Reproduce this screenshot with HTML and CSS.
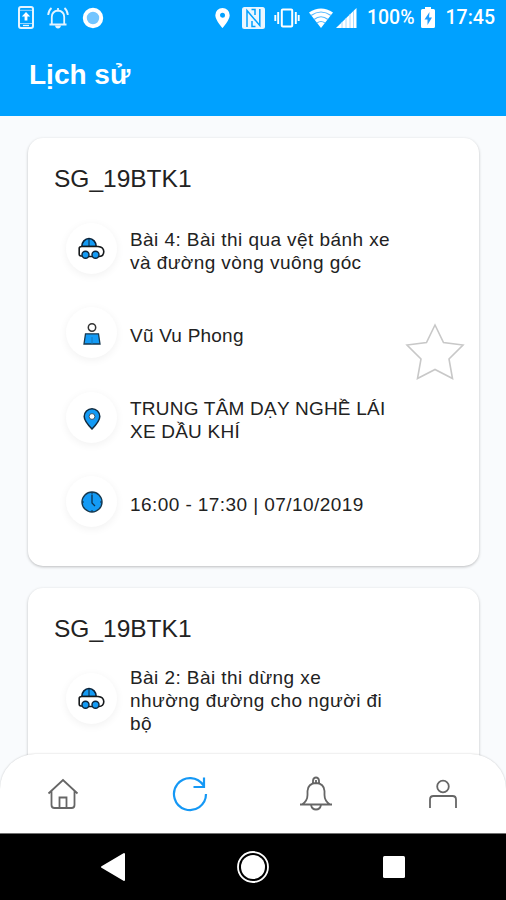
FILE: index.html
```html
<!DOCTYPE html>
<html lang="vi">
<head>
  <meta charset="UTF-8">
  <meta name="viewport" content="width=device-width, initial-scale=1.0">
  <title>Lịch sử</title>
  <link rel="stylesheet" href="styles.css">
</head>
<body>
  <!-- Shared icons -->
  <svg class="sprite" width="0" height="0">
    <symbol id="car" viewBox="0 0 27 23">
      <path d="M3.800 9.500A7.200 8 0 0 1 18.200 9.500Z" fill="#149bf5" stroke="#0b2238" stroke-width="1.600"/>
      <path d="M11 2v7" stroke="#0b2238"/>
      <path d="M4 19H3Q1.200 19 1.200 17V11Q1.500 9.500 4 9.500H20Q25.800 10 25.800 14.800 25.500 19.500 21 19.500H9" fill="#fff" stroke="#16191c" stroke-width="1.600"/>
      <circle cx="7.500" cy="17.800" r="3.500" fill="#149bf5" stroke="#0b2238" stroke-width="1.400"/>
      <circle cx="17.500" cy="17.800" r="3.500" fill="#149bf5" stroke="#0b2238" stroke-width="1.400"/>
    </symbol>
  </svg>

  <div class="phone">
    <header class="header">
      <div class="status">
        <div class="status-left">
          <svg width="16" height="24" viewBox="0 0 16 24">
            <rect x="1" y="1" width="14" height="21" rx="2" fill="none" stroke="#e4f4ff" stroke-width="2"/>
            <path d="M2 4.3h12M2 17.5h12" stroke="#9bd7ff"/>
            <path d="M8 6 3.8 10.5h2.8v4h2.8v-4h2.8Z" fill="#fff"/>
            <path d="M5 19.5h6" stroke="#e4f4ff" stroke-width="1.3"/>
          </svg>
          <svg width="22" height="24" viewBox="0 0 22 24" fill="none" stroke="#e4f4ff" stroke-width="1.8">
            <path d="M2.500 18.500h17M4.800 18V11Q5 5 11 4.500 17 5 17.200 11V18M11 4.500V2M4.500 2Q1.500 4.500 1.200 9M17.500 2q3 2.500 3.300 7"/>
            <path d="M8 19.500h6q-.5 3-3 3t-3-3Z" fill="#e4f4ff" stroke="none"/>
          </svg>
          <svg width="22" height="22" viewBox="0 0 22 22">
            <circle cx="11" cy="11" r="8.200" fill="#73c5ff" stroke="#fff" stroke-width="4"/>
          </svg>
        </div>
        <div class="status-right">
          <svg class="pin" width="15" height="20" viewBox="0 0 15 20">
            <path d="M7.500 0A7.200 7.200 0 0 0 .3 7.200C.3 12 7.500 20 7.500 20S14.700 12 14.700 7.200A7.200 7.200 0 0 0 7.500 0Zm0 4.700a2.500 2.500 0 1 1 0 5 2.500 2.500 0 0 1 0-5Z" fill="#fff" fill-rule="evenodd"/>
          </svg>
          <svg class="nfc" width="23" height="22" viewBox="0 0 23 22">
            <rect width="23" height="22" rx="2.500" fill="#eaf6ff"/>
            <path d="M5 20V3.500L17.800 18.500V2M9.500 2.500h3.500v5.500M13.500 19.500H10V14" fill="none" stroke="#00a1ff" stroke-width="1.500"/>
          </svg>
          <svg class="vibrate" width="26" height="20" viewBox="0 0 26 20" fill="none" stroke="#fff">
            <rect x="7.800" y="1.500" width="10.400" height="17" rx="1" stroke-width="2"/>
            <path d="M4.200 4v12M21.800 4v12M1.300 7v6M24.700 7v6" stroke-width="1.900"/>
          </svg>
          <svg class="wifi" width="24" height="20" viewBox="0 0 24 20">
            <path d="M0 4.500Q12-3.500 24 4.500L12 20Z" fill="#fff"/>
            <path d="M2 7.500Q12 .5 22 7.500M5 11.500Q12 6 19 11.500M8 15Q12 12 16 15" fill="none" stroke="#54b9ff" stroke-width="1.200"/>
          </svg>
          <svg class="signal" width="21" height="20" viewBox="0 0 21 20">
            <path d="M0 20 20.500 0V20Z" fill="#fff"/>
            <path d="M6 14v6M10 10v10M14 6v14M17.500 3v17" stroke="#a8daff"/>
          </svg>
          <span class="percent">100%</span>
          <svg class="battery" width="14" height="21" viewBox="0 0 14 21">
            <path d="M4 0H10V2H12.500Q14 2 14 3.500V19.500Q14 21 12.500 21H1.500Q0 21 0 19.500V3.500Q0 2 1.500 2H4Z" fill="#fff"/>
            <path d="M8.500 5 3.500 12.500H6.500V18L11 10.500H8Z" fill="#1b9dff"/>
          </svg>
          <span>17:45</span>
        </div>
      </div>
      <h1 class="title">Lịch sử</h1>
    </header>

    <main class="content">
      <section class="card">
        <h2 class="card-title">SG_19BTK1</h2>
        <div class="card-body">
          <ul class="info">
            <li class="info-row">
              <span class="icon"><svg width="27" height="23"><use href="#car"/></svg></span>
              <p>Bài 4: Bài thi qua vệt bánh xe<br>và đường vòng vuông góc</p>
            </li>
            <li class="info-row">
              <span class="icon">
                <svg width="18" height="24" viewBox="0 -2 18 24">
                  <circle cx="9" cy="4.500" r="3.700" fill="#fff" stroke="#333" stroke-width="1.500"/>
                  <path d="M2.500 10.800H15.500L17 21H1Z" fill="#149bf5" stroke="#17394f" stroke-width="1.300"/>
                  <path d="M9 14v7" stroke="#1679ba"/>
                </svg>
              </span>
              <p class="tight">Vũ Vu Phong</p>
            </li>
            <li class="info-row">
              <span class="icon">
                <svg width="18" height="25" viewBox="0 -3 18 25">
                  <path d="M9 21Q1.200 13 1.200 8.500A7.800 7.800 0 0 1 16.800 8.500Q16.800 13 9 21Z" fill="#149bf5" stroke="#122c40" stroke-width="1.500"/>
                  <circle cx="9" cy="8.500" r="2.900" fill="#fff" stroke="#234" stroke-width=".8"/>
                </svg>
              </span>
              <p class="tight">TRUNG TÂM DẠY NGHỀ LÁI<br>XE DẦU KHÍ</p>
            </li>
            <li class="info-row">
              <span class="icon">
                <svg width="22" height="22" viewBox="0 0 22 22">
                  <circle cx="11" cy="11" r="10" fill="#149bf5" stroke="#17394f" stroke-width="1.400"/>
                  <path d="M11 3.500V12L14 15" fill="none" stroke="#0b3353" stroke-width="1.300"/>
                  <path d="M11 1v2M11 19v2M1 11h2M19 11h2" stroke="#0b3353"/>
                </svg>
              </span>
              <p>16:00 - 17:30 | 07/10/2019</p>
            </li>
          </ul>
          <svg class="star" width="60" height="58" viewBox="0 0 60 58">
            <path d="M30 2 38.500 19.500 58 22 44 36 47.500 55.500 30 46.500 12.500 55.500 16 36 2 22 21.500 19.500Z" fill="none" stroke="#c8c8c8" stroke-width="1.600"/>
          </svg>
        </div>
      </section>

      <section class="card">
        <h2 class="card-title">SG_19BTK1</h2>
        <div class="card-body">
          <ul class="info">
            <li class="info-row">
              <span class="icon"><svg width="27" height="23"><use href="#car"/></svg></span>
              <p>Bài 2: Bài thi dừng xe<br>nhường đường cho người đi<br>bộ</p>
            </li>
          </ul>
        </div>
      </section>
    </main>

    <nav class="tabs">
      <a class="tab">
        <svg width="32" height="32" viewBox="0 0 32 32">
          <path d="M1.500 15.500 16 2 30.500 15.500M4.500 13V27Q4.500 30 7.500 30H24.500Q27.500 30 27.500 27V13M12.500 30V19.500H19.500V30"/>
        </svg>
      </a>
      <a class="tab active">
        <svg width="36" height="36" viewBox="0 0 36 36">
          <path d="M34 18A16 16 0 1 1 31.500 9.500M32 1.500V11H21.500"/>
        </svg>
      </a>
      <a class="tab">
        <svg width="34" height="36" viewBox="0 0 34 36">
          <path d="M1 28.500H33M3 28.500Q8.500 25 8.500 19V15Q9 7.500 17 7 25 7.500 25.500 15V19Q25.500 25 31 28.500M14 7.500V4.500Q14.500 1.500 17 1.500T20 4.500V7.500M17 4v3M12 29Q13 33.500 17 33.500T22 29"/>
        </svg>
      </a>
      <a class="tab">
        <svg width="30" height="30" viewBox="0 0 30 30">
          <circle cx="15" cy="7.500" r="5.800"/>
          <path d="M2 29V20.500Q2 17 5.500 17H24.500Q28 17 28 20.500V29"/>
        </svg>
      </a>
    </nav>

    <footer class="system-bar">
      <svg width="34" height="30" viewBox="-4 0 34 30"><path d="M24 2V28L2 15Z" fill="#fff" stroke="#fff" stroke-width="2" stroke-linejoin="round"/></svg>
      <svg width="34" height="34" viewBox="0 0 34 34"><circle cx="17" cy="17" r="15" fill="none" stroke="#fff" stroke-width="1.800"/><circle cx="17" cy="17" r="12" fill="#fff"/></svg>
      <svg width="34" height="22" viewBox="-6 0 34 22"><rect width="22" height="22" rx="1.500" fill="#fff"/></svg>
    </footer>
  </div>
</body>
</html>
```

FILE: styles.css
```css
* {
  box-sizing: border-box;
}

body {
  margin: 0;
  font-family: "Liberation Sans", Arial, sans-serif;
  color: #222;
}

svg {
  display: block;
  flex-shrink: 0;
}

.sprite {
  display: none;
}

.phone {
  display: flex;
  flex-direction: column;
  width: 506px;
  height: 900px;
  overflow: hidden;
  background: #f9fbfd;
}

/* Header */
.header {
  flex: none;
  height: 116px;
  background: #00a1ff;
  color: #fff;
}

.status {
  display: flex;
  justify-content: space-between;
  align-items: center;
  height: 35px;
  padding: 0 11px 0 18px;
  font-family: Roboto, sans-serif;
  font-size: 19.5px;
  font-weight: 500;
}

.status-left,
.status-right {
  display: flex;
  align-items: center;
}

.status-left {
  gap: 13px;
}

.nfc {
  margin-left: 12px;
}

.vibrate {
  margin-left: 9px;
}

.wifi {
  margin-left: 9px;
}

.signal {
  margin-left: 3px;
}

.percent {
  margin-left: 9.5px;
}

.battery {
  margin: 0 11px 0 6px;
}

.title {
  margin: 24px 0 0 29px;
  font-size: 28px;
  line-height: 32px;
}

/* Cards */
.content {
  flex: 1;
  min-height: 0;
  padding: 22px 27px 0 28px;
  overflow: hidden;
}

.card {
  height: 428px;
  margin-bottom: 22px;
  padding: 26px 14px 0 26px;
  background: #fff;
  border-radius: 15px;
  box-shadow: 0 1px 3px rgba(0, 0, 0, 0.25);
}

.card-title {
  margin: 0;
  font-size: 24.5px;
  font-weight: normal;
  line-height: 30px;
}

.card-body {
  display: flex;
  justify-content: space-between;
  align-items: center;
}

.info {
  margin: 12px 0 0;
  padding: 0 0 0 12px;
  list-style: none;
}

.info-row {
  display: flex;
  align-items: center;
  gap: 13px;
  height: 84.5px;
}

.info-row p {
  margin: 5px 0 0;
  font-size: 19px;
  letter-spacing: 0.43px;
  line-height: 23px;
  white-space: nowrap;
}

.info-row .tight {
  letter-spacing: 0.22px;
}

.icon {
  display: flex;
  justify-content: center;
  align-items: center;
  width: 51px;
  height: 51px;
  border-radius: 50%;
  background: #fff;
  box-shadow: 0 2px 8px rgba(0, 0, 0, 0.06);
}

.star {
  margin-top: -35px;
}

/* Bottom navigation */
.tabs {
  display: grid;
  grid-template-columns: repeat(4, 1fr);
  flex: none;
  z-index: 1;
  height: 79px;
  margin-top: -35px;
  background: #fff;
  border-radius: 35px 35px 0 0;
  box-shadow: 0 0 2px rgba(0, 0, 0, 0.22);
}

.tab {
  display: flex;
  justify-content: center;
  align-items: center;
}

.tab svg {
  fill: none;
  stroke: #666;
  stroke-width: 1.8;
}

.tab.active svg {
  stroke: #1598f5;
  stroke-width: 2.2;
}

.system-bar {
  display: flex;
  justify-content: center;
  align-items: center;
  flex: none;
  gap: 106.5px;
  height: 67px;
  border-top: 1px solid #777;
  background: #000;
}
```
